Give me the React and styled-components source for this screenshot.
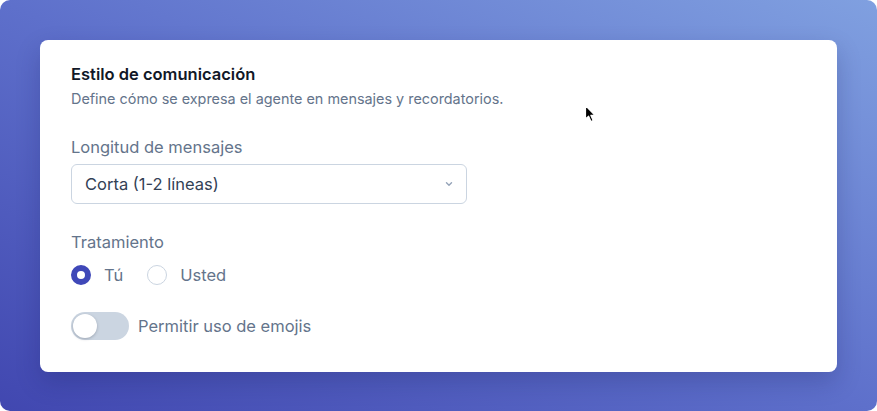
import React, { useState } from 'react';
import styled, { createGlobalStyle } from 'styled-components';

const GlobalStyle = createGlobalStyle`
  html, body {
    margin: 0;
    padding: 0;
    background: #ffffff;
  }
  body {
    font-family: Inter, "Noto Sans", "Liberation Sans", sans-serif;
    -webkit-font-smoothing: antialiased;
  }
`;

const Page = styled.div`
  width: 877px;
  height: 411px;
  box-sizing: border-box;
  padding: 40px;
  border-radius: 10px;
  background: linear-gradient(to top right, #4147b0 0%, #5e70cb 50%, #80a0e0 100%);
  position: relative;
  overflow: hidden;
`;

const Card = styled.section`
  background: #ffffff;
  border-radius: 8px;
  box-shadow: 0 10px 24px rgba(20, 24, 80, 0.22);
  padding: 24px 31px 32px;
  display: flex;
  flex-direction: column;
`;

const Title = styled.h2`
  margin: 0;
  font-size: 16.5px;
  line-height: 20px;
  font-weight: 600;
  color: #111827;
`;

const Subtitle = styled.p`
  margin: 6px 0 0;
  font-size: 14.4px;
  line-height: 18px;
  color: #64748b;
`;

const Label = styled.div`
  margin-top: ${({ $gap }) => $gap}px;
  font-size: 16.5px;
  line-height: 24px;
  color: #64748b;
`;

const SelectBox = styled.div`
  margin-top: 5px;
  width: 396px;
  height: 40px;
  box-sizing: border-box;
  border: 1px solid #cbd5e1;
  border-radius: 6px;
  display: flex;
  align-items: center;
  justify-content: space-between;
  padding: 0 12px 0 13px;
  font-size: 16.5px;
  color: #334155;
`;

const Chevron = () => (
  <svg width="10" height="10" viewBox="0 0 10 10" fill="none">
    <path d="M2.5 3.8 L5 6.2 L7.5 3.8" stroke="#94a3b8" strokeWidth="1.4" strokeLinecap="round" strokeLinejoin="round" />
  </svg>
);

const RadioRow = styled.div`
  margin-top: 9px;
  height: 24px;
  display: flex;
  align-items: center;
  gap: 24px;
`;

const RadioOption = styled.label`
  display: flex;
  align-items: center;
  gap: 13px;
  font-size: 16.5px;
  color: #64748b;
  cursor: pointer;
`;

const RadioDot = styled.span`
  width: 20px;
  height: 20px;
  box-sizing: border-box;
  border-radius: 50%;
  border: ${({ $checked }) => ($checked ? '6px solid #3f48b8' : '1px solid #cbd5e1')};
  background: #ffffff;
`;

const ToggleRow = styled.label`
  margin-top: 25px;
  display: flex;
  align-items: center;
  gap: 9px;
  font-size: 16.5px;
  color: #64748b;
  cursor: pointer;
`;

const Track = styled.span`
  width: 58px;
  height: 28px;
  border-radius: 14px;
  background: ${({ $on }) => ($on ? '#3f48b8' : '#cbd5e1')};
  position: relative;
  flex-shrink: 0;
`;

const Knob = styled.span`
  position: absolute;
  top: 2px;
  left: ${({ $on }) => ($on ? '32px' : '2px')};
  width: 24px;
  height: 24px;
  border-radius: 50%;
  background: #ffffff;
  box-shadow: 0 1px 3px rgba(15, 23, 42, 0.25);
`;

const Cursor = styled.svg`
  position: absolute;
  left: 584px;
  top: 104px;
`;

export default function App() {
  const [trato, setTrato] = useState('tu');
  const [emojis, setEmojis] = useState(false);

  return (
    <>
      <GlobalStyle />
      <Page>
        <Card>
          <Title>Estilo de comunicación</Title>
          <Subtitle>Define cómo se expresa el agente en mensajes y recordatorios.</Subtitle>

          <Label $gap={27}>Longitud de mensajes</Label>
          <SelectBox>
            <span>Corta (1-2 líneas)</span>
            <Chevron />
          </SelectBox>

          <Label $gap={26}>Tratamiento</Label>
          <RadioRow>
            <RadioOption onClick={() => setTrato('tu')}>
              <RadioDot $checked={trato === 'tu'} />
              Tú
            </RadioOption>
            <RadioOption onClick={() => setTrato('usted')}>
              <RadioDot $checked={trato === 'usted'} />
              Usted
            </RadioOption>
          </RadioRow>

          <ToggleRow onClick={() => setEmojis(!emojis)}>
            <Track $on={emojis}>
              <Knob $on={emojis} />
            </Track>
            Permitir uso de emojis
          </ToggleRow>
        </Card>
        <Cursor width="14" height="20" viewBox="0 0 14 20">
          <path d="M1.5 1.5 L1.5 15 L4.6 12.2 L7 17.6 L9.2 16.6 L6.9 11.4 L11 11.4 Z" fill="#000" stroke="#fff" strokeWidth="1.2" strokeLinejoin="round" />
        </Cursor>
      </Page>
    </>
  );
}
